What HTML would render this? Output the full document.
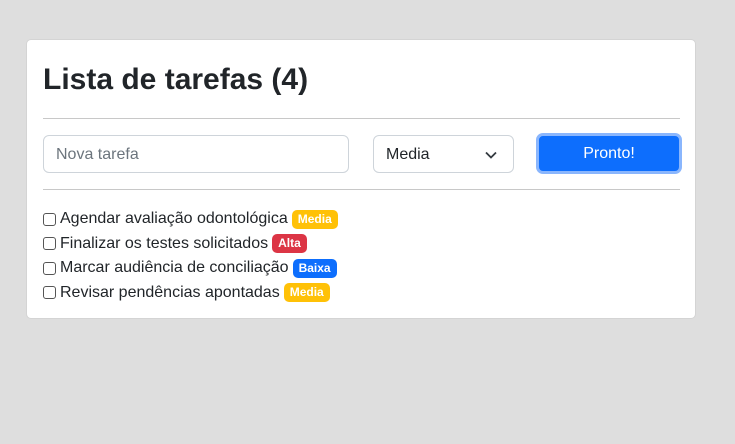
<!DOCTYPE html>
<html><head><meta charset="utf-8"><style>
body{margin:0;background:#dedede;font-family:"Liberation Sans",sans-serif;color:#212529;width:735px;height:444px;overflow:hidden}
.card{position:absolute;left:26px;top:39px;width:668px;height:278px;background:#fff;border:1px solid #d4d4d4;border-radius:5px}
h1{position:absolute;left:16px;top:20px;margin:0;font-size:30px;font-weight:bold;line-height:40px;letter-spacing:0}
.hr{position:absolute;left:16px;width:637px;height:1px;background:#c8c8c8}
.inp{position:absolute;left:16px;top:95px;color:#6c757d;font-size:16px;line-height:38px;padding-left:12px;box-sizing:border-box;width:306px;height:38px;border:1px solid #ced4da;border-radius:6px}
.sel{position:absolute;left:346px;top:95px;width:141px;height:38px;box-sizing:border-box;border:1px solid #ced4da;border-radius:6px;font-size:16px;line-height:38px;padding-left:12px}
.sel svg{position:absolute;right:16px;top:15px}
.btn{position:absolute;left:509px;top:93px;width:146px;height:41px;box-sizing:border-box;background:#0d6efd;border:3px solid #8ab6fd;border-radius:7px;color:#fff;font-size:16px;line-height:36px;text-align:center}
.items{position:absolute;left:16px;top:167px;font-size:16px;line-height:24.5px}
.it{display:flex;align-items:center;white-space:nowrap}
.cb{width:11px;height:11px;border:1px solid #555;border-radius:3px;margin-right:4px;display:inline-block}
.b{font-size:12px;font-weight:bold;color:#fff;border-radius:5px;padding:0 6px;line-height:19px;margin-left:4px}
</style></head><body>
<div class="card">
<h1>Lista de tarefas (4)</h1>
<div class="hr" style="top:78px"></div>
<div class="inp">Nova tarefa</div>
<div class="sel">Media<svg width="12" height="8" viewBox="0 0 12 8"><path d="M1 1.5l5 5 5-5" fill="none" stroke="#343a40" stroke-width="1.8"/></svg></div>
<div class="btn">Pronto!</div>
<div class="hr" style="top:149px"></div>
<div class="items">
<div class="it"><span class="cb"></span>Agendar avaliação odontológica<span class="b" style="background:#ffc107">Media</span></div>
<div class="it"><span class="cb"></span>Finalizar os testes solicitados<span class="b" style="background:#dc3545">Alta</span></div>
<div class="it"><span class="cb"></span>Marcar audiência de conciliação<span class="b" style="background:#0d6efd">Baixa</span></div>
<div class="it"><span class="cb"></span>Revisar pendências apontadas<span class="b" style="background:#ffc107">Media</span></div>
</div>
</div>
</body></html>
